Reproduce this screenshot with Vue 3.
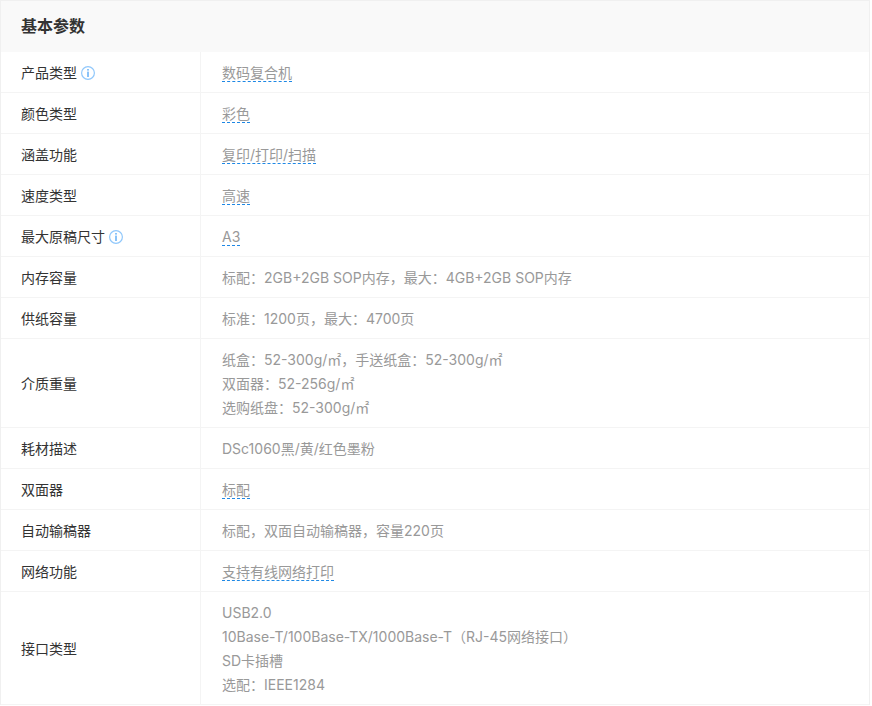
<script setup>
const rows = [
  { label: '产品类型', info: true, lines: ['数码复合机'], link: true },
  { label: '颜色类型', lines: ['彩色'], link: true },
  { label: '涵盖功能', lines: ['复印/打印/扫描'], link: true },
  { label: '速度类型', lines: ['高速'], link: true },
  { label: '最大原稿尺寸', info: true, lines: ['A3'], link: true },
  { label: '内存容量', lines: ['标配：2GB+2GB SOP内存，最大：4GB+2GB SOP内存'] },
  { label: '供纸容量', lines: ['标准：1200页，最大：4700页'] },
  { label: '介质重量', lines: ['纸盒：52-300g/㎡，手送纸盒：52-300g/㎡', '双面器：52-256g/㎡', '选购纸盘：52-300g/㎡'] },
  { label: '耗材描述', lines: ['DSc1060黑/黄/红色墨粉'] },
  { label: '双面器', lines: ['标配'], link: true },
  { label: '自动输稿器', lines: ['标配，双面自动输稿器，容量220页'] },
  { label: '网络功能', lines: ['支持有线网络打印'], link: true },
  { label: '接口类型', lines: ['USB2.0', '10Base-T/100Base-TX/1000Base-T（RJ-45网络接口）', 'SD卡插槽', '选配：IEEE1284'] },
]
</script>

<template>
  <div class="panel">
    <h3 class="title">基本参数</h3>
    <div v-for="row in rows" :key="row.label" class="row">
      <div class="label">
        <span>{{ row.label }}</span>
        <svg v-if="row.info" class="info" viewBox="0 0 14 14" width="14" height="14">
          <circle cx="7" cy="7" r="6.4" fill="none" stroke="#91c8fb" stroke-width="1.2" />
          <rect x="6.2" y="3" width="1.6" height="1.6" fill="#6db5f8" />
          <rect x="6.2" y="5.6" width="1.6" height="5.4" fill="#6db5f8" />
        </svg>
      </div>
      <div class="value">
        <div v-for="line in row.lines" :key="line" class="line">
          <span :class="{ link: row.link }">{{ line }}</span>
        </div>
      </div>
    </div>
  </div>
</template>

<style>
html, body { margin: 0; background: #fff; }
</style>

<style scoped>
.panel {
  width: 870px;
  box-sizing: border-box;
  border: 1px solid #f0f0f0;
  border-bottom: 0;
  font-family: "Inter", "Noto Sans CJK SC", sans-serif;
  font-size: 14px;
  line-height: 24px;
  background: #fff;
}
.title {
  margin: 0;
  height: 51px;
  line-height: 51px;
  padding-left: 20px;
  font-size: 16px;
  font-weight: 700;
  color: #333;
  background: #f9f9f9;
}
.row {
  display: flex;
  border-bottom: 1px solid #f4f4f4;
}
.label {
  width: 200px;
  box-sizing: border-box;
  padding-left: 20px;
  padding-top: 1px;
  border-right: 1px solid #f4f4f4;
  display: flex;
  align-items: center;
  gap: 4px;
  color: #333;
  flex: none;
}
.value {
  padding: 8px 0 8px 21px;
  color: #999;
}
.line { position: relative; top: 1px; }
.link {
  border-bottom: 1px dashed #1e88e5;
}
.info { flex: none; }
</style>
